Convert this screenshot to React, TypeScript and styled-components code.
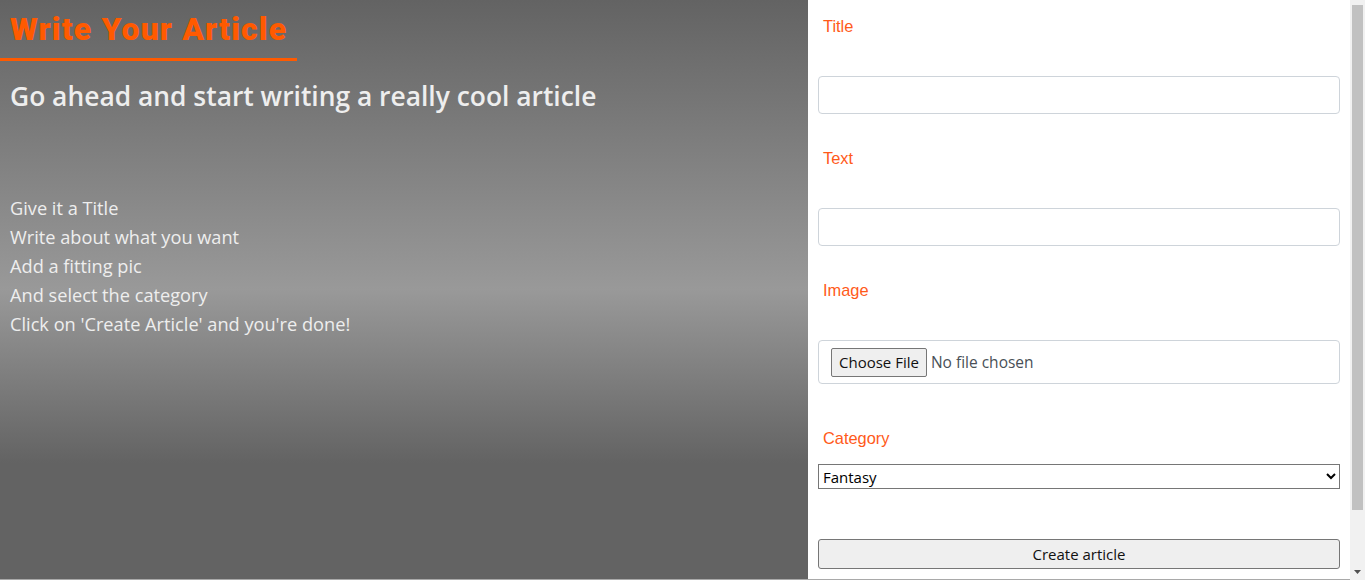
import React from "react";
import styled, { createGlobalStyle } from "styled-components";

const GlobalStyle = createGlobalStyle`
  html, body {
    margin: 0;
    padding: 0;
    overflow: hidden;
  }
  body {
    font-family: "Open Sans", "Liberation Sans", sans-serif;
    background: #ffffff;
  }
  * { box-sizing: border-box; }
`;

const Window = styled.div`
  display: flex;
  height: 580px;
  overflow: hidden;
`;

const Viewport = styled.div`
  flex: 1;
  min-width: 0;
  display: flex;
  flex-direction: column;
`;

const ScrollTrack = styled.div`
  flex: 0 0 15px;
  display: flex;
  flex-direction: column;
  padding: 5px 2px 0 2px;
  background: #f1f1f1;
`;

const ScrollThumb = styled.div`
  height: 505px;
  background: #c1c1c1;
`;

const ScrollSpacer = styled.div`
  flex: 1;
`;

const ScrollArrow = styled.div`
  height: 17px;
  display: flex;
  align-items: center;
  justify-content: center;
  margin: 0 -2px;
`;

const Main = styled.main`
  display: flex;
  flex: 0 0 579px;
`;

const Intro = styled.section`
  flex: 0 0 808px;
  display: flex;
  flex-direction: column;
  align-items: flex-start;
  background: linear-gradient(to bottom, #636363 0%, #999999 50%, #636363 80%, #636363 100%);
  color: #eeeeee;
`;

const Heading = styled.h1`
  margin: 0;
  padding: 10px 10px 10px 10px;
  font-family: "Roboto", "Liberation Sans", sans-serif;
  font-weight: 900;
  font-size: 32px;
  line-height: 38px;
  letter-spacing: 1.1px;
  color: #ff5a00;
  border-bottom: 3px solid #ff5a00;
`;

const Subheading = styled.h2`
  margin: 17px 0 0 0;
  padding: 0 10px;
  font-family: "Open Sans", "Liberation Sans", sans-serif;
  font-weight: 600;
  font-size: 26.4px;
  line-height: 36px;
  color: #eeeeee;
`;

const Steps = styled.ul`
  list-style: none;
  margin: 80px 0 0 0;
  padding: 0 10px;
  font-family: "Open Sans", "Liberation Sans", sans-serif;
  font-size: 18.2px;
  line-height: 29px;
  color: #eeeeee;
`;

const Step = styled.li``;

const Form = styled.form`
  flex: 1;
  display: flex;
  flex-direction: column;
  padding: 0 10px;
  background: #ffffff;
`;

const Label = styled.label<{ $top: number; $bottom: number }>`
  display: block;
  margin: ${(p) => p.$top}px 0 ${(p) => p.$bottom}px 0;
  padding-left: 5px;
  font-family: "Liberation Sans", "Roboto", sans-serif;
  font-size: 16.4px;
  line-height: 22px;
  color: #ff5a1a;
`;

const TextInput = styled.input`
  display: block;
  width: 100%;
  height: 38px;
  padding: 6px 12px;
  font-family: "Open Sans", "Liberation Sans", sans-serif;
  font-size: 16px;
  border: 1px solid #ced4da;
  border-radius: 4px;
  background: #fff;
`;

const FileBox = styled.div`
  display: flex;
  align-items: center;
  gap: 4px;
  height: 44px;
  padding: 0 12px;
  border: 1px solid #ced4da;
  border-radius: 4px;
  font-family: "Open Sans", "Liberation Sans", sans-serif;
  font-size: 15.5px;
  color: #495057;
`;

const FileButton = styled.button`
  height: 29px;
  padding: 0 7px;
  font-family: "Open Sans", "Liberation Sans", sans-serif;
  font-size: 15px;
  color: #111;
  background: #efefef;
  border: 1px solid #767676;
  border-radius: 2px;
`;

const Select = styled.select`
  display: block;
  width: 100%;
  height: 25px;
  padding: 0;
  font-family: "Open Sans", "Liberation Sans", sans-serif;
  font-size: 15px;
  color: #000;
  background: #fff;
  border: 1px solid #767676;
  border-radius: 0;
`;

const Submit = styled.button`
  display: block;
  width: 100%;
  height: 30px;
  margin-top: 50px;
  font-family: "Open Sans", "Liberation Sans", sans-serif;
  font-size: 15px;
  color: #111;
  background: #efefef;
  border: 1px solid #767676;
  border-radius: 3px;
`;

const Footer = styled.footer`
  flex: 0 0 60px;
  border-top: 1px solid #a9a9a9;
  background: #ffffff;
`;

export default function App() {
  return (
    <Window>
      <GlobalStyle />
      <Viewport>
        <Main>
          <Intro>
            <Heading>Write Your Article</Heading>
            <Subheading>Go ahead and start writing a really cool article</Subheading>
            <Steps>
              <Step>Give it a Title</Step>
              <Step>Write about what you want</Step>
              <Step>Add a fitting pic</Step>
              <Step>And select the category</Step>
              <Step>Click on 'Create Article' and you're done!</Step>
            </Steps>
          </Intro>
          <Form onSubmit={(e) => e.preventDefault()}>
            <Label $top={15} $bottom={39} htmlFor="title">Title</Label>
            <TextInput id="title" type="text" />
            <Label $top={33} $bottom={39} htmlFor="text">Text</Label>
            <TextInput id="text" type="text" />
            <Label $top={33} $bottom={39}>Image</Label>
            <FileBox>
              <FileButton type="button">Choose File</FileButton>
              <span>No file chosen</span>
            </FileBox>
            <Label $top={43} $bottom={15} htmlFor="category">Category</Label>
            <Select id="category" defaultValue="Fantasy">
              <option>Fantasy</option>
              <option>Science Fiction</option>
              <option>Adventure</option>
            </Select>
            <Submit type="submit">Create article</Submit>
          </Form>
        </Main>
        <Footer />
      </Viewport>
      <ScrollTrack aria-hidden="true">
        <ScrollThumb />
        <ScrollSpacer />
        <ScrollArrow>
          <svg width="7" height="4" viewBox="0 0 7 4">
            <path d="M0 0 L7 0 L3.5 4 Z" fill="#505050" />
          </svg>
        </ScrollArrow>
      </ScrollTrack>
    </Window>
  );
}
